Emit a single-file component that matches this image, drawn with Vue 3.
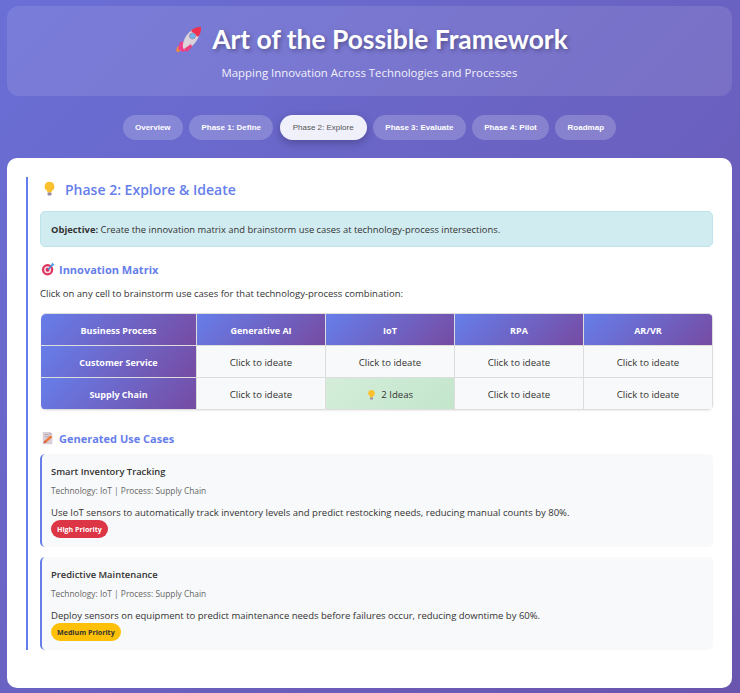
<template>
  <div class="page">
    <header class="hero">
      <h1 class="hero-title">
        <svg class="rocket" viewBox="3 2 26 27" width="28" height="27">
          <path d="M4 28c-1.500-2-.5-4.500 1.500-6l3 3c-1 2-2.500 3.500-4.500 3z" fill="#f08a3c" />
          <path d="M7 18l-2 7 5 3 6-3-2-8z" fill="#ee3f8f" />
          <path d="M10 24c-1-5 2-13 9-18l7 6c-3 8-10 13-14 14z" fill="#ddd3dc" />
          <path d="M18 7c2-2.500 6-4.500 10-4 .5 4-1 7-3 10z" fill="#f0304f" />
          <path d="M11 25l3 3 5-5-1-3z" fill="#e9407f" />
          <circle cx="19.500" cy="12" r="3" fill="#6fb4ee" stroke="#9a93b5" />
        </svg>
        Art of the Possible Framework
      </h1>
      <p class="hero-sub">Mapping Innovation Across Technologies and Processes</p>
    </header>

    <nav class="tabs">
      <button v-for="tab in tabs" :key="tab" type="button" class="tab" :class="{ active: tab === activeTab }">{{ tab }}</button>
    </nav>

    <main class="card">
      <section class="phase">
        <h2 class="phase-title">
          <svg class="bulb" viewBox="0 0 16 20" width="13" height="16">
            <path d="M8 1a6 6 0 0 0-3.500 10.900c.8.7 1 1.600 1 2.600h5c0-1 .2-1.900 1-2.600A6 6 0 0 0 8 1z" fill="#fbc02d" />
            <rect x="5.500" y="14.500" width="5" height="3.500" rx="1" fill="#9a8aa0" />
          </svg>
          Phase 2: Explore &amp; Ideate
        </h2>

        <div class="objective"><strong>Objective:</strong> Create the innovation matrix and brainstorm use cases at technology-process intersections.</div>

        <h3 class="sub-title">
          <svg viewBox="0 0 16 16" width="14" height="14">
            <circle cx="7.500" cy="8.800" r="6.500" fill="#e0355f" />
            <circle cx="7.500" cy="8.800" r="4" fill="#f3dbe4" />
            <circle cx="7.500" cy="8.800" r="2.200" fill="#d92c5c" />
            <path d="M8 8.500l6-6" stroke="#3a8dde" stroke-width="1.600" />
            <path d="M11.500 2.500l2-2 .5 1.500 1.500.5-2 2z" fill="#4aa3ec" />
          </svg>
          Innovation Matrix
        </h3>
        <p class="hint">Click on any cell to brainstorm use cases for that technology-process combination:</p>

        <table class="matrix">
          <thead>
            <tr>
              <th v-for="col in columns" :key="col">{{ col }}</th>
            </tr>
          </thead>
          <tbody>
            <tr v-for="row in rows" :key="row.name">
              <th>{{ row.name }}</th>
              <td v-for="tech in techs" :key="tech" :class="{ filled: row.ideas[tech] }">
                <template v-if="row.ideas[tech]">
                  <svg class="bulb-small" viewBox="0 0 16 20" width="9" height="12">
                    <path d="M8 1a6 6 0 0 0-3.500 10.900c.8.7 1 1.600 1 2.600h5c0-1 .2-1.900 1-2.600A6 6 0 0 0 8 1z" fill="#fbc02d" />
                    <rect x="5.500" y="14.500" width="5" height="3.500" rx="1" fill="#9a8aa0" />
                  </svg>
                  {{ row.ideas[tech] }} Ideas
                </template>
                <template v-else>Click to ideate</template>
              </td>
            </tr>
          </tbody>
        </table>

        <h3 class="sub-title cases-title">
          <svg viewBox="0 0 16 16" width="14" height="14">
            <path d="M2 1h8l3 3v11H2z" fill="#d9cfd6" />
            <path d="M10 1l3 3h-3z" fill="#b7abb3" />
            <path d="M4 4h5M4 6.500h7" stroke="#a89ca6" stroke-width=".8" />
            <path d="M3 14l1-3 7-6 2 2-7 6z" fill="#f0793a" />
            <path d="M3 14l1-3 2 2z" fill="#c9503a" />
          </svg>
          Generated Use Cases
        </h3>

        <article v-for="item in useCases" :key="item.title" class="use-case">
          <h4 class="case-title">{{ item.title }}</h4>
          <p class="case-meta">Technology: {{ item.tech }} | Process: {{ item.process }}</p>
          <p class="case-text">{{ item.text }}</p>
          <span class="badge" :class="item.level">{{ item.priority }}</span>
        </article>
      </section>
    </main>
  </div>
</template>

<script setup>
const tabs = ['Overview', 'Phase 1: Define', 'Phase 2: Explore', 'Phase 3: Evaluate', 'Phase 4: Pilot', 'Roadmap']
const activeTab = 'Phase 2: Explore'

const techs = ['Generative AI', 'IoT', 'RPA', 'AR/VR']
const columns = ['Business Process', ...techs]
const rows = [
  { name: 'Customer Service', ideas: {} },
  { name: 'Supply Chain', ideas: { IoT: 2 } }
]

const useCases = [
  {
    title: 'Smart Inventory Tracking',
    tech: 'IoT',
    process: 'Supply Chain',
    text: 'Use IoT sensors to automatically track inventory levels and predict restocking needs, reducing manual counts by 80%.',
    priority: 'High Priority',
    level: 'high'
  },
  {
    title: 'Predictive Maintenance',
    tech: 'IoT',
    process: 'Supply Chain',
    text: 'Deploy sensors on equipment to predict maintenance needs before failures occur, reducing downtime by 60%.',
    priority: 'Medium Priority',
    level: 'medium'
  }
]
</script>

<style>
html,
body {
  margin: 0;
}

body {
  min-height: 100vh;
  background: linear-gradient(135deg, #6a6fd6 0%, #6a55ae 100%);
}
</style>

<style scoped>
.page {
  box-sizing: border-box;
  padding: 6px 8px 5px 7px;
  font-family: "Open Sans", "Noto Sans", sans-serif;
  color: #333;
}

.hero {
  height: 90px;
  box-sizing: border-box;
  padding-top: 17px;
  border-radius: 12px;
  background: rgba(255, 255, 255, 0.1);
  text-align: center;
  color: #fff;
}

.hero-title {
  display: flex;
  align-items: center;
  justify-content: center;
  gap: 9px;
  margin: 0;
  padding-left: 4px;
  height: 32px;
  font-family: Lato, "Open Sans", sans-serif;
  font-size: 26.4px;
  font-weight: 700;
  text-shadow: 2px 2px 4px rgba(0, 0, 0, 0.3);
}

.hero-sub {
  margin: 9px 0 0;
  font-size: 11.4px;
  line-height: 17px;
  opacity: 0.9;
}

.tabs {
  display: flex;
  justify-content: center;
  gap: 6.5px;
  margin: 19px 0 18px;
}

.tab {
  height: 25px;
  padding: 0 12.2px;
  border: 0;
  border-radius: 13px;
  background: rgba(255, 255, 255, 0.2);
  color: #fff;
  font-family: "Liberation Sans", Arial, sans-serif;
  font-size: 8px;
  font-weight: 700;
}

.tab.active {
  padding: 0 13px;
  background: rgba(255, 255, 255, 0.9);
  color: #555;
  font-weight: 400;
  box-shadow: 0 3px 10px rgba(0, 0, 0, 0.25);
}

.card {
  box-sizing: border-box;
  height: 530px;
  padding: 19px 19px;
  border-radius: 10px;
  background: #fff;
}

.phase {
  box-sizing: border-box;
  height: 473px;
  padding-left: 12px;
  border-left: 2px solid #667eea;
}

.phase-title {
  display: flex;
  align-items: center;
  gap: 9px;
  height: 24px;
  margin: 0 0 10px;
  padding-left: 3px;
  color: #667eea;
  font-size: 14px;
  font-weight: 600;
}

.objective {
  box-sizing: border-box;
  height: 36px;
  padding: 0 10px;
  border: 1px solid #bee5eb;
  border-radius: 5px;
  background: #d1ecf1;
  font-size: 9.4px;
  line-height: 35px;
}

.sub-title {
  display: flex;
  align-items: center;
  gap: 4px;
  height: 18px;
  margin: 13px 0 7px;
  padding-left: 1px;
  color: #667eea;
  font-size: 11px;
  font-weight: 700;
}

.hint {
  margin: 9px 0 13px;
  font-size: 9.5px;
  line-height: 14px;
}

.matrix {
  width: 672px;
  margin-left: 1px;
  table-layout: fixed;
  border-collapse: separate;
  border-spacing: 0;
  border-radius: 5px;
  overflow: hidden;
  box-shadow: 0 -1px 0 #ddd, 0 1px 2px rgba(0, 0, 0, 0.08);
  font-size: 9.6px;
}

.matrix th,
.matrix td {
  box-sizing: content-box;
  height: 30px;
  padding: 1px 0 0;
  text-align: center;
  border-right: 1px solid #ddd;
  border-bottom: 1px solid #ddd;
}

.matrix th {
  background: linear-gradient(135deg, #667eea, #764ba2);
  color: #fff;
  font-size: 9px;
  font-weight: 700;
}

.matrix thead th:first-child,
.matrix tbody th {
  width: 155px;
}

.matrix td {
  background: #f8f9fa;
}

.matrix td.filled {
  background: linear-gradient(135deg, #d4edda, #c3e6cb);
}

.bulb-small {
  vertical-align: -3px;
  margin-right: 3px;
}

.cases-title {
  margin: 19px 0 7px;
}

.use-case {
  box-sizing: border-box;
  height: 93px;
  margin-bottom: 10px;
  padding: 10px 9px 9px;
  border-left: 2px solid #667eea;
  border-radius: 5px;
  background: #f8f9fa;
}

.case-title {
  margin: 0;
  font-size: 9.4px;
  line-height: 15px;
  font-weight: 600;
}

.case-meta {
  margin: 5px 0 0;
  font-size: 8.4px;
  line-height: 14px;
  color: #666;
}

.case-text {
  margin: 8px 0 0;
  font-size: 9.5px;
  line-height: 14px;
}

.badge {
  display: block;
  width: fit-content;
  height: 18px;
  padding: 0 6px;
  border-radius: 9px;
  font-size: 7.1px;
  line-height: 18px;
  font-weight: 700;
}

.badge.high {
  background: #dc3545;
  color: #fff;
}

.badge.medium {
  background: #ffc107;
  color: #333;
}
</style>
